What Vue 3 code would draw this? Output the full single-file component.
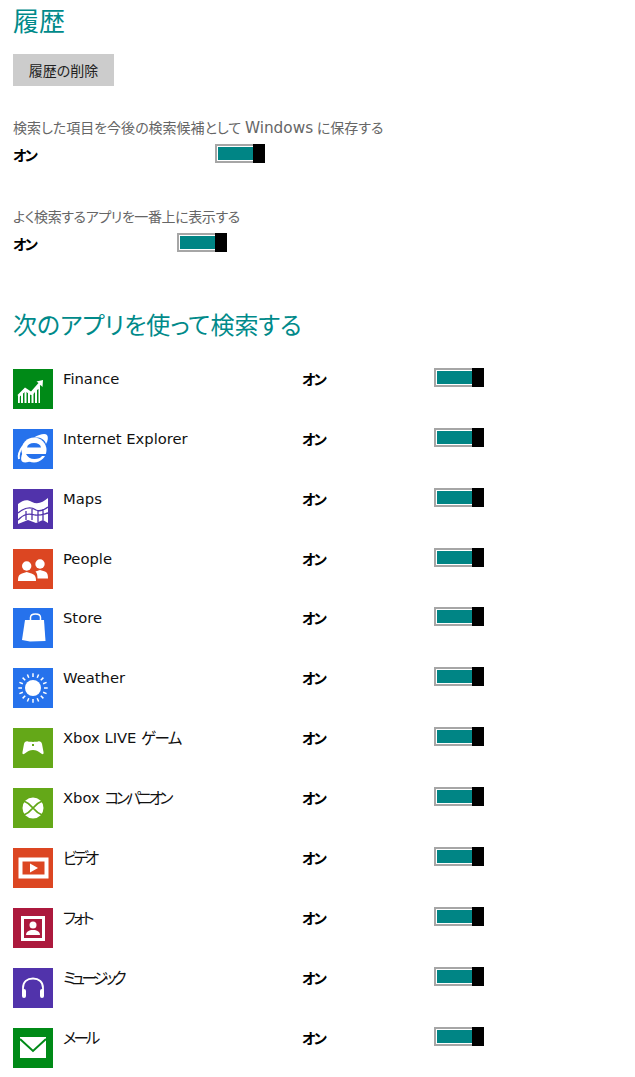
<script setup>
const apps = [
  { name: 'Finance', key: 'finance', color: '#008a17' },
  { name: 'Internet Explorer', key: 'ie', color: '#2672ec' },
  { name: 'Maps', key: 'maps', color: '#5133ab' },
  { name: 'People', key: 'people', color: '#dc4622' },
  { name: 'Store', key: 'store', color: '#2672ec' },
  { name: 'Weather', key: 'weather', color: '#2672ec' },
  { name: 'Xbox LIVE ', kana: 'ゲーム', ls: -1.6, key: 'game', color: '#64a818' },
  { name: 'Xbox ', kana: 'コンパニオン', ls: -3.3, key: 'xbox', color: '#64a818' },
  { name: '', kana: 'ビデオ', ls: -3.3, key: 'video', color: '#dc4622' },
  { name: '', kana: 'フォト', ls: -2.7, key: 'photo', color: '#ac193d' },
  { name: '', kana: 'ミュージック', ls: -3.7, key: 'music', color: '#5133ab' },
  { name: '', kana: 'メール', ls: -3, key: 'mail', color: '#008a17' }
]
const rays = Array.from({ length: 16 }, (_, i) => i * 22.5)
</script>

<template>
  <main class="page">
    <h2 class="title first">履歴</h2>
    <button class="btn" type="button">履歴の削除</button>

    <section class="setting">
      <p class="label">検索した項目を今後の検索候補として <span class="latin">Windows</span> に保存する</p>
      <div class="state-row">
        <b class="state">オン</b>
        <span class="toggle t-a"><i class="fill"></i><i class="thumb"></i></span>
      </div>
    </section>

    <section class="setting second">
      <p class="label tight">よく検索するアプリを一番上に表示する</p>
      <div class="state-row">
        <b class="state">オン</b>
        <span class="toggle t-b"><i class="fill"></i><i class="thumb"></i></span>
      </div>
    </section>

    <h2 class="title apps-title">次のアプリを使って検索する</h2>

    <ul class="apps">
      <li v-for="a in apps" :key="a.key" class="app">
        <span class="tile" :style="{ background: a.color }">
          <svg viewBox="0 0 40 40" width="40" height="40">
            <g v-if="a.key === 'finance'" fill="#fff">
              <path d="M5 34V27L12 20 18 24 25 16 27 17V34H25.500V20L24 21V34H22V23L20.500 25V34H18.500V26L17 25.500V34H15V24L13.500 23V34H11.500V23L10 24.500V34H8V26L6.800 27.500V34Z" />
              <path d="M4.500 26L12 18.500 18 22.500 25.500 14 23.500 12.500 30 11 29.500 18 27.500 16 18.500 26 12.300 22 6 28Z" />
            </g>
            <g v-else-if="a.key === 'ie'">
              <circle cx="21" cy="21" r="12.500" fill="#fff" />
              <path d="M14 18.500C14.500 15.500 17 14 21 14S27.500 15.500 28 18.500Z" fill="#2672ec" />
              <path d="M13 25H33.500V27H29C28 29 25 30 21.500 30 17.500 30 14.500 28 13 25Z" fill="#2672ec" />
              <path d="M21 8.500C26 5.500 32 4 34 6 35.500 8 35 11.500 33 15 32.500 12 29 9 25 8.500Z" fill="#fff" />
              <path d="M9.500 24C8 27.500 7.500 31 9 32.500 11 34 15 33.500 18 32 14 31 11 28 9.500 24Z" fill="#fff" />
              <path d="M10 17C7 21 5 26 6 30" fill="none" stroke="#fff" stroke-width="2" />
            </g>
            <g v-else-if="a.key === 'maps'">
              <path d="M5 15C10 11 14 10 19 13 25 16 30 13 35 9V34L30 31 23 34 15 31 5 35Z" fill="#fff" />
              <path d="M5 24C11 19 17 17 23 21 27 23 31 21 35 18M5 31C11 25 15 24 22 26 27 27 31 25 35 24M13 22V31M19 20V31M25 22V33M30 20V31" fill="none" stroke="#5133ab" stroke-width="1.300" />
            </g>
            <g v-else-if="a.key === 'people'" fill="#fff">
              <circle cx="13.700" cy="17" r="4.700" />
              <circle cx="27" cy="15" r="4.700" />
              <path d="M5 32C5 27 6 25.500 9 24.500L13.700 23 18.500 24.500C21.500 25.500 23 27 23 32Z" />
              <path d="M24.500 29.500C24.500 26 24 24 22.500 22.500L27 21 32 22.500C34.500 23.500 35 26 35 29.500Z" />
            </g>
            <g v-else-if="a.key === 'store'">
              <path d="M12 12H31L32.500 33 17 33.500 9 32Z" fill="#fff" />
              <path d="M17.500 12V9.500C17.500 7 19 6 22.500 6S27.500 7 27.500 9.500V12" fill="none" stroke="#fff" stroke-width="1.500" />
            </g>
            <g v-else-if="a.key === 'weather'">
              <circle cx="20" cy="20" r="8" fill="#fff" />
              <path v-for="r in rays" :key="r" d="M20 9V5.300" stroke="#fff" stroke-width="1.500" :transform="`rotate(${r} 20 20)`" />
            </g>
            <g v-else-if="a.key === 'game'">
              <path d="M15 13.500C17 14 23 14 25 13.500 27 13 28.500 14 29 16L30.500 24C31 27 29 26.500 27.500 25 25 23 23 22 20 22S15 23 12.500 25C11 26.500 9 27 9.500 24L11 16C11.500 14 13 13 15 13.500Z" fill="#fff" />
              <rect x="19" y="16" width="2" height="2" fill="#64a818" />
            </g>
            <g v-else-if="a.key === 'xbox'">
              <circle cx="20" cy="20" r="10.500" fill="#fff" />
              <path d="M10 12.500Q16 15 20 20T30 27.500M30 12.500Q24 15 20 20T10 27.500" fill="none" stroke="#64a818" stroke-width="1.800" />
            </g>
            <g v-else-if="a.key === 'video'">
              <rect x="7.500" y="11.500" width="26" height="17" fill="none" stroke="#fff" stroke-width="4" />
              <path d="M17 15.500L25 20 17 24.500Z" fill="#fff" />
            </g>
            <g v-else-if="a.key === 'photo'">
              <rect x="9.500" y="9.500" width="21" height="22" fill="none" stroke="#fff" stroke-width="3" />
              <circle cx="20" cy="17" r="3.500" fill="#fff" />
              <path d="M13 27C13 24 15 23 18 22H22C25 23 27 24 27 27Z" fill="#fff" />
            </g>
            <g v-else-if="a.key === 'music'">
              <path d="M10 23V20C10 14 14 10.500 20 10.500S30 14 30 20V23" fill="none" stroke="#fff" stroke-width="1.800" />
              <rect x="9" y="21" width="4" height="9" rx="2" fill="#fff" />
              <rect x="27" y="21" width="4" height="9" rx="2" fill="#fff" />
            </g>
            <g v-else>
              <path d="M7 9H33V30H7Z" fill="#fff" />
              <path d="M7 11L20 23 33 11" fill="none" stroke="#008a17" stroke-width="2" />
            </g>
          </svg>
        </span>
        <span class="app-name">{{ a.name }}<span v-if="a.kana" class="kana" :style="{ letterSpacing: a.ls + 'px' }">{{ a.kana }}</span></span>
        <b class="state">オン</b>
        <span class="toggle"><i class="fill"></i><i class="thumb"></i></span>
      </li>
    </ul>
  </main>
</template>

<style scoped>
.page {
  box-sizing: border-box;
  width: 635px;
  height: 1077px;
  overflow: hidden;
  padding: 0 0 0 13px;
  background: #fff;
  font-family: "Noto Sans", "Noto Sans CJK JP", sans-serif;
  font-feature-settings: "palt";
}
.title {
  margin: 0;
  font-size: 26px;
  line-height: 36px;
  font-weight: 400;
  color: #008a8a;
}
.first { padding-top: 3px; }
.btn {
  display: block;
  box-sizing: border-box;
  width: 101px;
  height: 32px;
  margin: 15px 0 0;
  padding: 0;
  border: 0;
  background: #cccccc;
  color: #222;
  font: inherit;
  font-size: 14px;
}
.setting { margin-top: 32px; }
.setting.second { margin-top: 44px; }
.label {
  margin: 0;
  height: 20px;
  font-size: 14px;
  line-height: 20px;
  color: #666;
}
.latin {
  font-family: "DejaVu Sans", sans-serif;
  font-size: 15.300px;
  line-height: 1;
}
.tight { letter-spacing: -0.400px; }
.state-row {
  display: flex;
  align-items: flex-start;
  height: 19px;
  margin-top: 6px;
}
.state {
  display: block;
  width: 24px;
  font-size: 14.500px;
  line-height: 22px;
  letter-spacing: -2px;
  white-space: nowrap;
  font-weight: 700;
  color: #000;
}
.toggle {
  position: relative;
  display: block;
  box-sizing: border-box;
  width: 50px;
  height: 19px;
  border: 2px solid #a6a6a6;
  border-right: 0;
  padding: 1px 0 1px 1px;
}
.t-a { margin-left: 178px; }
.t-b { margin-left: 140px; }
.fill {
  display: block;
  width: 35px;
  height: 13px;
  background: #008585;
}
.thumb {
  position: absolute;
  right: 0;
  top: -2px;
  width: 12px;
  height: 19px;
  background: #000;
}
.apps-title { margin-top: 55px; font-size: 24px; }
.apps {
  list-style: none;
  margin: 24.900px 0 0;
  padding: 0;
  display: flex;
  flex-direction: column;
  gap: 18.875px;
}
.app {
  display: grid;
  grid-template-columns: 50px 239px 132px 50px;
  align-items: start;
  height: 41px;
}
.tile {
  display: block;
  width: 40px;
  height: 40px;
  margin-top: 1px;
}
.tile svg { display: block; }
.app-name {
  font-family: "DejaVu Sans", "Noto Sans CJK JP", sans-serif;
  font-size: 14.750px;
  line-height: 22px;
  white-space: pre;
  color: #111;
}
.kana {
  font-family: "Noto Sans CJK JP", sans-serif;
  font-size: 15.500px;
  line-height: 1;
  vertical-align: -1px;
}
</style>
